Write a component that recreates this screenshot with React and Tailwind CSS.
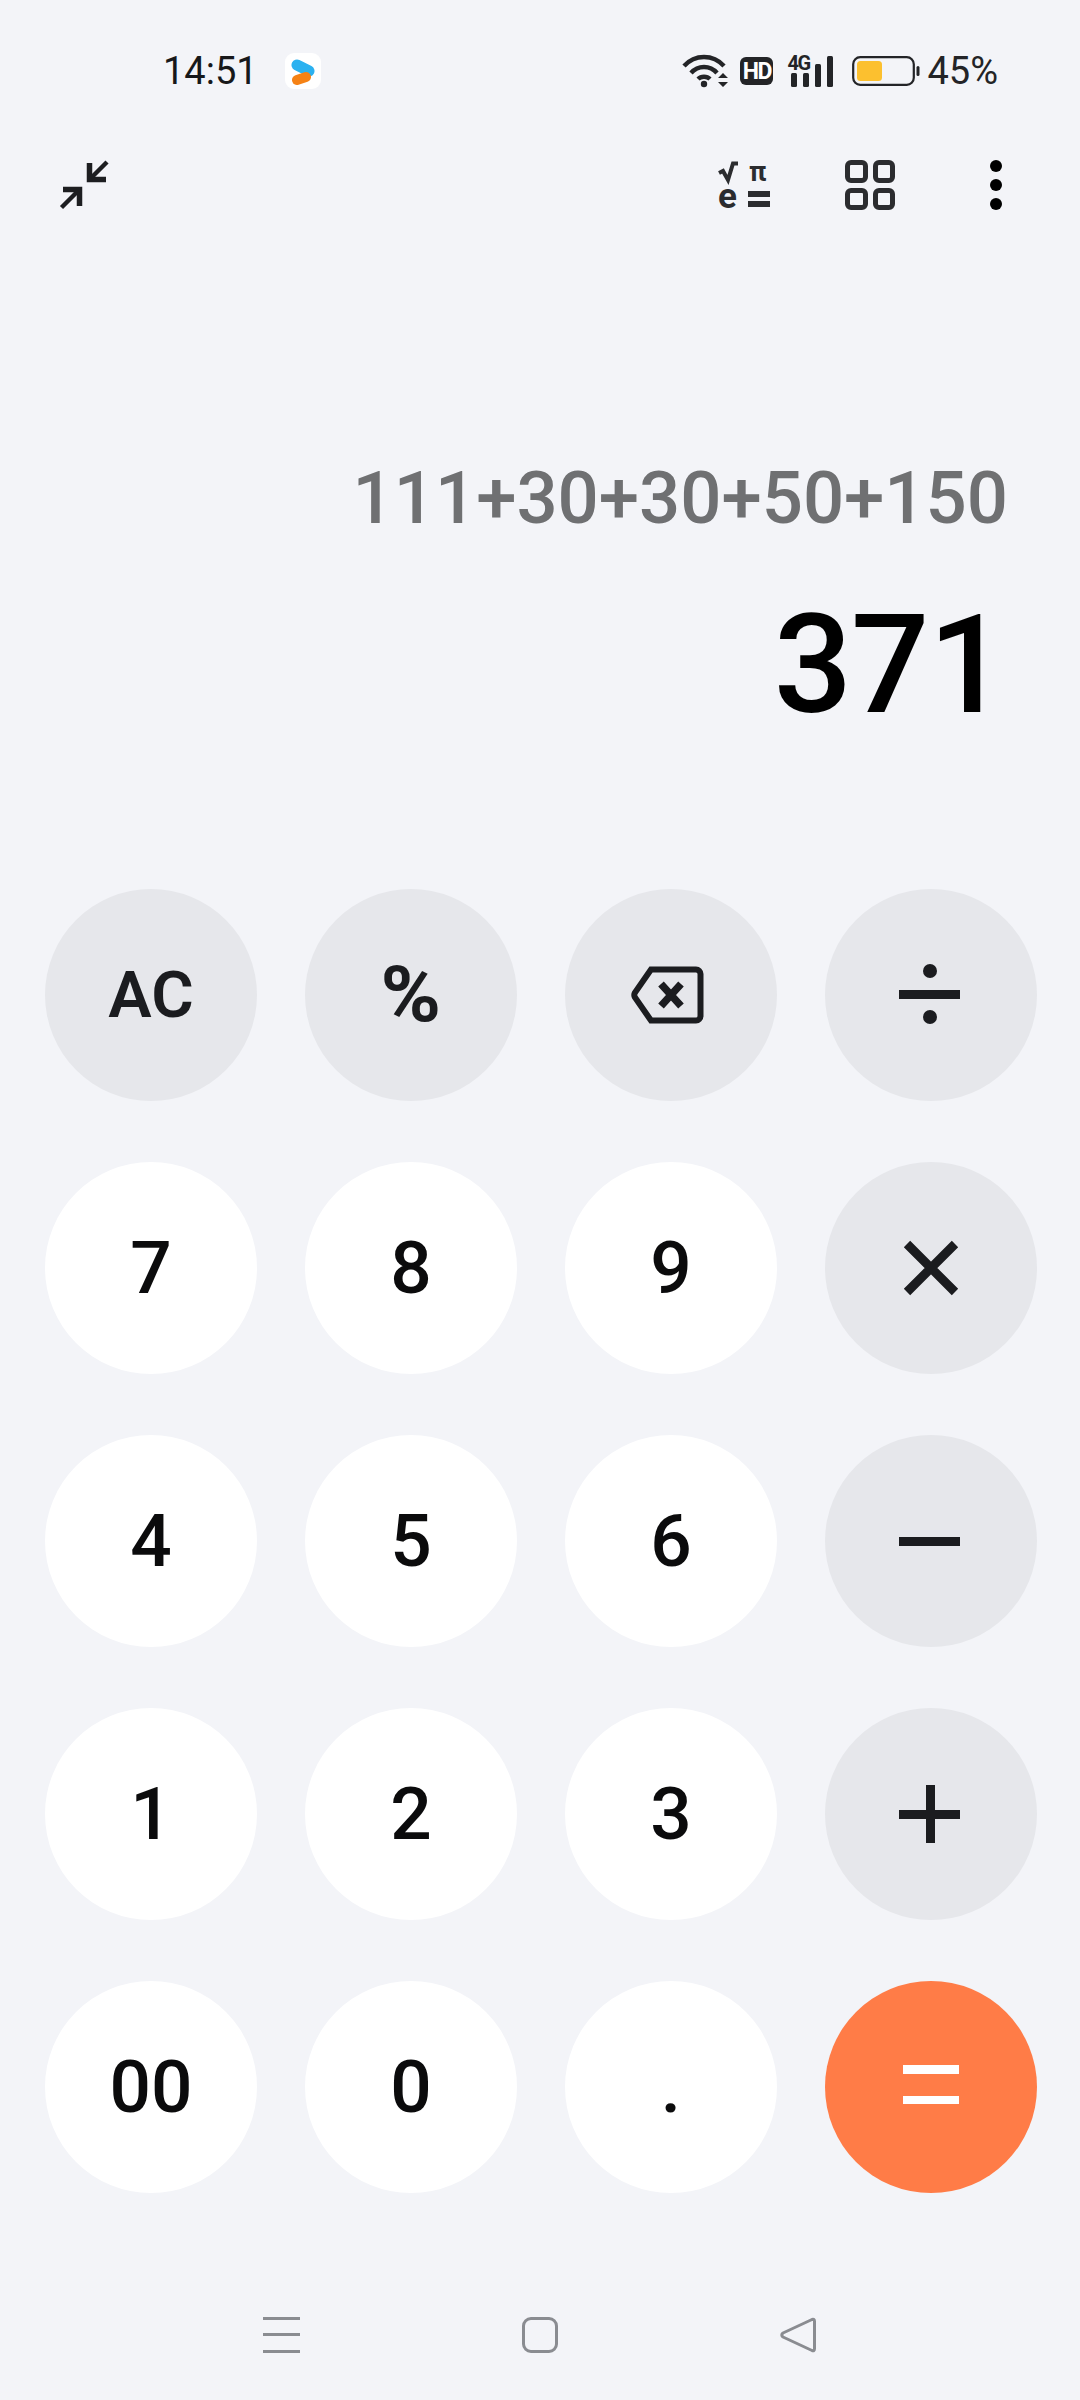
const font = { fontFamily: 'Roboto, "Noto Sans", sans-serif' };

function Key({ tone = "white", children }) {
  const toneClass = tone === "white" ? "bg-white" : tone === "grey" ? "bg-[#e6e7eb]" : "bg-[#ff7c47]";
  return (
    <button className={`w-[212px] h-[212px] rounded-full flex items-center justify-center ${toneClass}`}>
      {children}
    </button>
  );
}

const Digit = ({ children }) => (
  <span className="text-[73px] leading-none font-medium text-[#0b0b0c]">{children}</span>
);

const Op = ({ children }) => (
  <svg width="80" height="80" viewBox="0 0 80 80" fill="#1b1c1f" stroke="none">{children}</svg>
);

export default function App() {
  return (
    <div className="w-[1080px] h-[2400px] bg-[#f3f4f8] flex flex-col overflow-hidden" style={font}>
      {/* Status bar */}
      <div className="h-[142px] flex items-center pl-[163px] pr-[82px] shrink-0">
        <span className="text-[38px] leading-none text-[#17181a] w-[122px]">14:51</span>
        <div className="w-[36px] h-[36px] rounded-[9px] bg-white flex items-center justify-center">
          <svg width="24" height="28" viewBox="0 0 24 28">
            <path d="M6 8 L18 14" stroke="#2bb1f0" strokeWidth="11" strokeLinecap="round" />
            <path d="M6 23 L15 20" stroke="#f58215" strokeWidth="10" strokeLinecap="round" />
          </svg>
        </div>
        <div className="flex-1" />
        <svg width="46" height="34" viewBox="0 0 46 34" fill="none" stroke="#232427" strokeWidth="4.4">
          <path d="M2 12 C13 0 31 0 42 12" />
          <path d="M9 19 C16 11 28 11 35 19" />
          <path d="M16 25 C19 22 25 22 28 25" />
          <circle cx="22" cy="30" r="3.2" fill="#232427" stroke="none" />
          <path d="M36 24 L41 19 L46 24 Z M36 28 L46 28 L41 33 Z" fill="#232427" stroke="none" />
        </svg>
        <div className="ml-[12px] w-[33px] h-[28px] rounded-[6px] bg-[#232427] flex items-center justify-center text-white text-[23px] font-bold leading-none tracking-[-1.5px]">
          HD
        </div>
        <div className="ml-[15px] relative w-[46px] h-[32px]">
          <svg width="46" height="32" viewBox="0 0 46 32" fill="#232427">
            <rect x="3" y="18" width="6" height="14" rx="1.5" />
            <rect x="15" y="18" width="6" height="14" rx="1.5" />
            <rect x="27" y="9" width="6" height="23" rx="1.5" />
            <rect x="39" y="1" width="6" height="31" rx="1.5" />
          </svg>
          <span className="absolute -left-[1px] -top-[2px] text-[20px] font-bold leading-none text-[#232427] tracking-[-1.5px]">4G</span>
        </div>
        <svg className="ml-[18px]" width="68" height="30" viewBox="0 0 68 30">
          <rect x="1.2" y="1.2" width="60.6" height="27.6" rx="7" fill="none" stroke="#232427" strokeWidth="2.2" />
          <rect x="5" y="5" width="25" height="20" rx="3.5" fill="#fcc02f" />
          <rect x="64.5" y="10" width="3" height="10" rx="1.5" fill="#232427" />
        </svg>
        <span className="ml-[7px] text-[38px] leading-none text-[#232427]">45%</span>
      </div>

      {/* Toolbar */}
      <div className="h-[86px] flex items-center pl-[59px] pr-[78px] shrink-0">
        <svg width="50" height="50" viewBox="0 0 50 50" fill="none" stroke="#1d1e21">
          <path d="M30.5 3 V19.5 H47" strokeWidth="5.5" />
          <path d="M32 18 L48 2" strokeWidth="4.5" />
          <path d="M4 29.5 H20.5 V46" strokeWidth="5.5" />
          <path d="M19 31 L2.5 47.5" strokeWidth="4.5" />
        </svg>
        <div className="flex-1" />
        <svg width="54" height="50" viewBox="0 0 54 50" fill="#2b2c2f" className="overflow-visible">
          <path d="M1 13 L5 11 L10 20 L15 3.5 H20" fill="none" stroke="#2b2c2f" strokeWidth="4" />
          <text x="31" y="21" fontSize="27" fontWeight="700">π</text>
          <text x="0" y="48" fontSize="35" fontWeight="700">e</text>
          <rect x="30" y="31" width="22" height="6" />
          <rect x="30" y="41" width="22" height="6" />
        </svg>
        <div className="ml-[73px] w-[50px] h-[50px] grid grid-cols-2 gap-[5px]">
          <div className="border-[5px] border-[#2b2c2f] rounded-[6px]" />
          <div className="border-[5px] border-[#2b2c2f] rounded-[6px]" />
          <div className="border-[5px] border-[#2b2c2f] rounded-[6px]" />
          <div className="border-[5px] border-[#2b2c2f] rounded-[6px]" />
        </div>
        <div className="ml-[95px] flex flex-col gap-[7px]">
          <div className="w-[12px] h-[12px] rounded-full bg-black" />
          <div className="w-[12px] h-[12px] rounded-full bg-black" />
          <div className="w-[12px] h-[12px] rounded-full bg-black" />
        </div>
      </div>

      {/* Display */}
      <div className="h-[661px] shrink-0 flex flex-col items-end pr-[73px] pt-[219px]">
        <div className="-mr-[1px] text-[72.5px] leading-[104px] font-medium text-[#6f7072] whitespace-nowrap">111+30+30+50+150</div>
        <div className="mt-[34px] mr-[1px] text-[138px] leading-[160px] font-medium text-black tracking-[-1px]">371</div>
      </div>

      {/* Keypad */}
      <div className="pl-[45px] grid grid-cols-[repeat(4,212px)] gap-x-[48px] gap-y-[61px] shrink-0">
        <Key tone="grey"><span className="text-[65px] leading-none font-semibold text-[#1b1c1f]">AC</span></Key>
        <Key tone="grey"><span className="text-[78px] leading-none font-bold text-[#1b1c1f] scale-x-105 inline-block">%</span></Key>
        <Key tone="grey">
          <svg width="80" height="80" viewBox="0 0 80 80" fill="none" stroke="#1b1c1f">
            <path d="M20 14.5 H65 a4.5 4.5 0 0 1 4.5 4.5 V61 a4.5 4.5 0 0 1 -4.5 4.5 H20 L4 42.5 a5 5 0 0 1 0 -5 Z" strokeWidth="6" />
            <path d="M30 29 L50 51 M50 29 L30 51" strokeWidth="7.5" />
          </svg>
        </Key>
        <Key tone="grey">
          <Op>
            <rect x="8" y="35" width="61" height="9" />
            <ellipse cx="39" cy="16" rx="7" ry="7" />
            <ellipse cx="39" cy="62" rx="7" ry="7" />
          </Op>
        </Key>

        <Key><Digit>7</Digit></Key>
        <Key><Digit>8</Digit></Key>
        <Key><Digit>9</Digit></Key>
        <Key tone="grey">
          <Op><path d="M16 16 L64 64 M64 16 L16 64" stroke="#1b1c1f" strokeWidth="9" fill="none" /></Op>
        </Key>

        <Key><Digit>4</Digit></Key>
        <Key><Digit>5</Digit></Key>
        <Key><Digit>6</Digit></Key>
        <Key tone="grey">
          <Op><rect x="8" y="36" width="61" height="9" /></Op>
        </Key>

        <Key><Digit>1</Digit></Key>
        <Key><Digit>2</Digit></Key>
        <Key><Digit>3</Digit></Key>
        <Key tone="grey">
          <Op>
            <rect x="8" y="36" width="61" height="9" />
            <rect x="35" y="11" width="9" height="58" />
          </Op>
        </Key>

        <Key><Digit>00</Digit></Key>
        <Key><Digit>0</Digit></Key>
        <Key><Digit>.</Digit></Key>
        <Key tone="orange">
          <svg width="80" height="80" viewBox="0 0 80 80" fill="#ffffff">
            <rect x="12" y="18" width="56" height="9" />
            <rect x="12" y="49" width="56" height="8" />
          </svg>
        </Key>
      </div>

      {/* Navigation bar */}
      <div className="flex-1 flex items-center pl-[263px] pt-[76px]">
        <div className="w-[37px] h-[36px] flex flex-col justify-between">
          <div className="h-[3px] bg-[#8a8c91]" />
          <div className="h-[3px] bg-[#8a8c91]" />
          <div className="h-[3px] bg-[#8a8c91]" />
        </div>
        <div className="ml-[222px] w-[36px] h-[36px] rounded-[9px] border-[3px] border-[#8a8c91]" />
        <svg className="ml-[222px]" width="36" height="36" viewBox="0 0 36 36" fill="none" stroke="#8a8c91" strokeWidth="3" strokeLinejoin="round">
          <path d="M32 2.5 Q34.5 1.5 34.5 4.5 V31.5 Q34.5 34.5 32 33.5 L3 20 Q0.5 18 3 16 Z" />
        </svg>
      </div>
    </div>
  );
}
